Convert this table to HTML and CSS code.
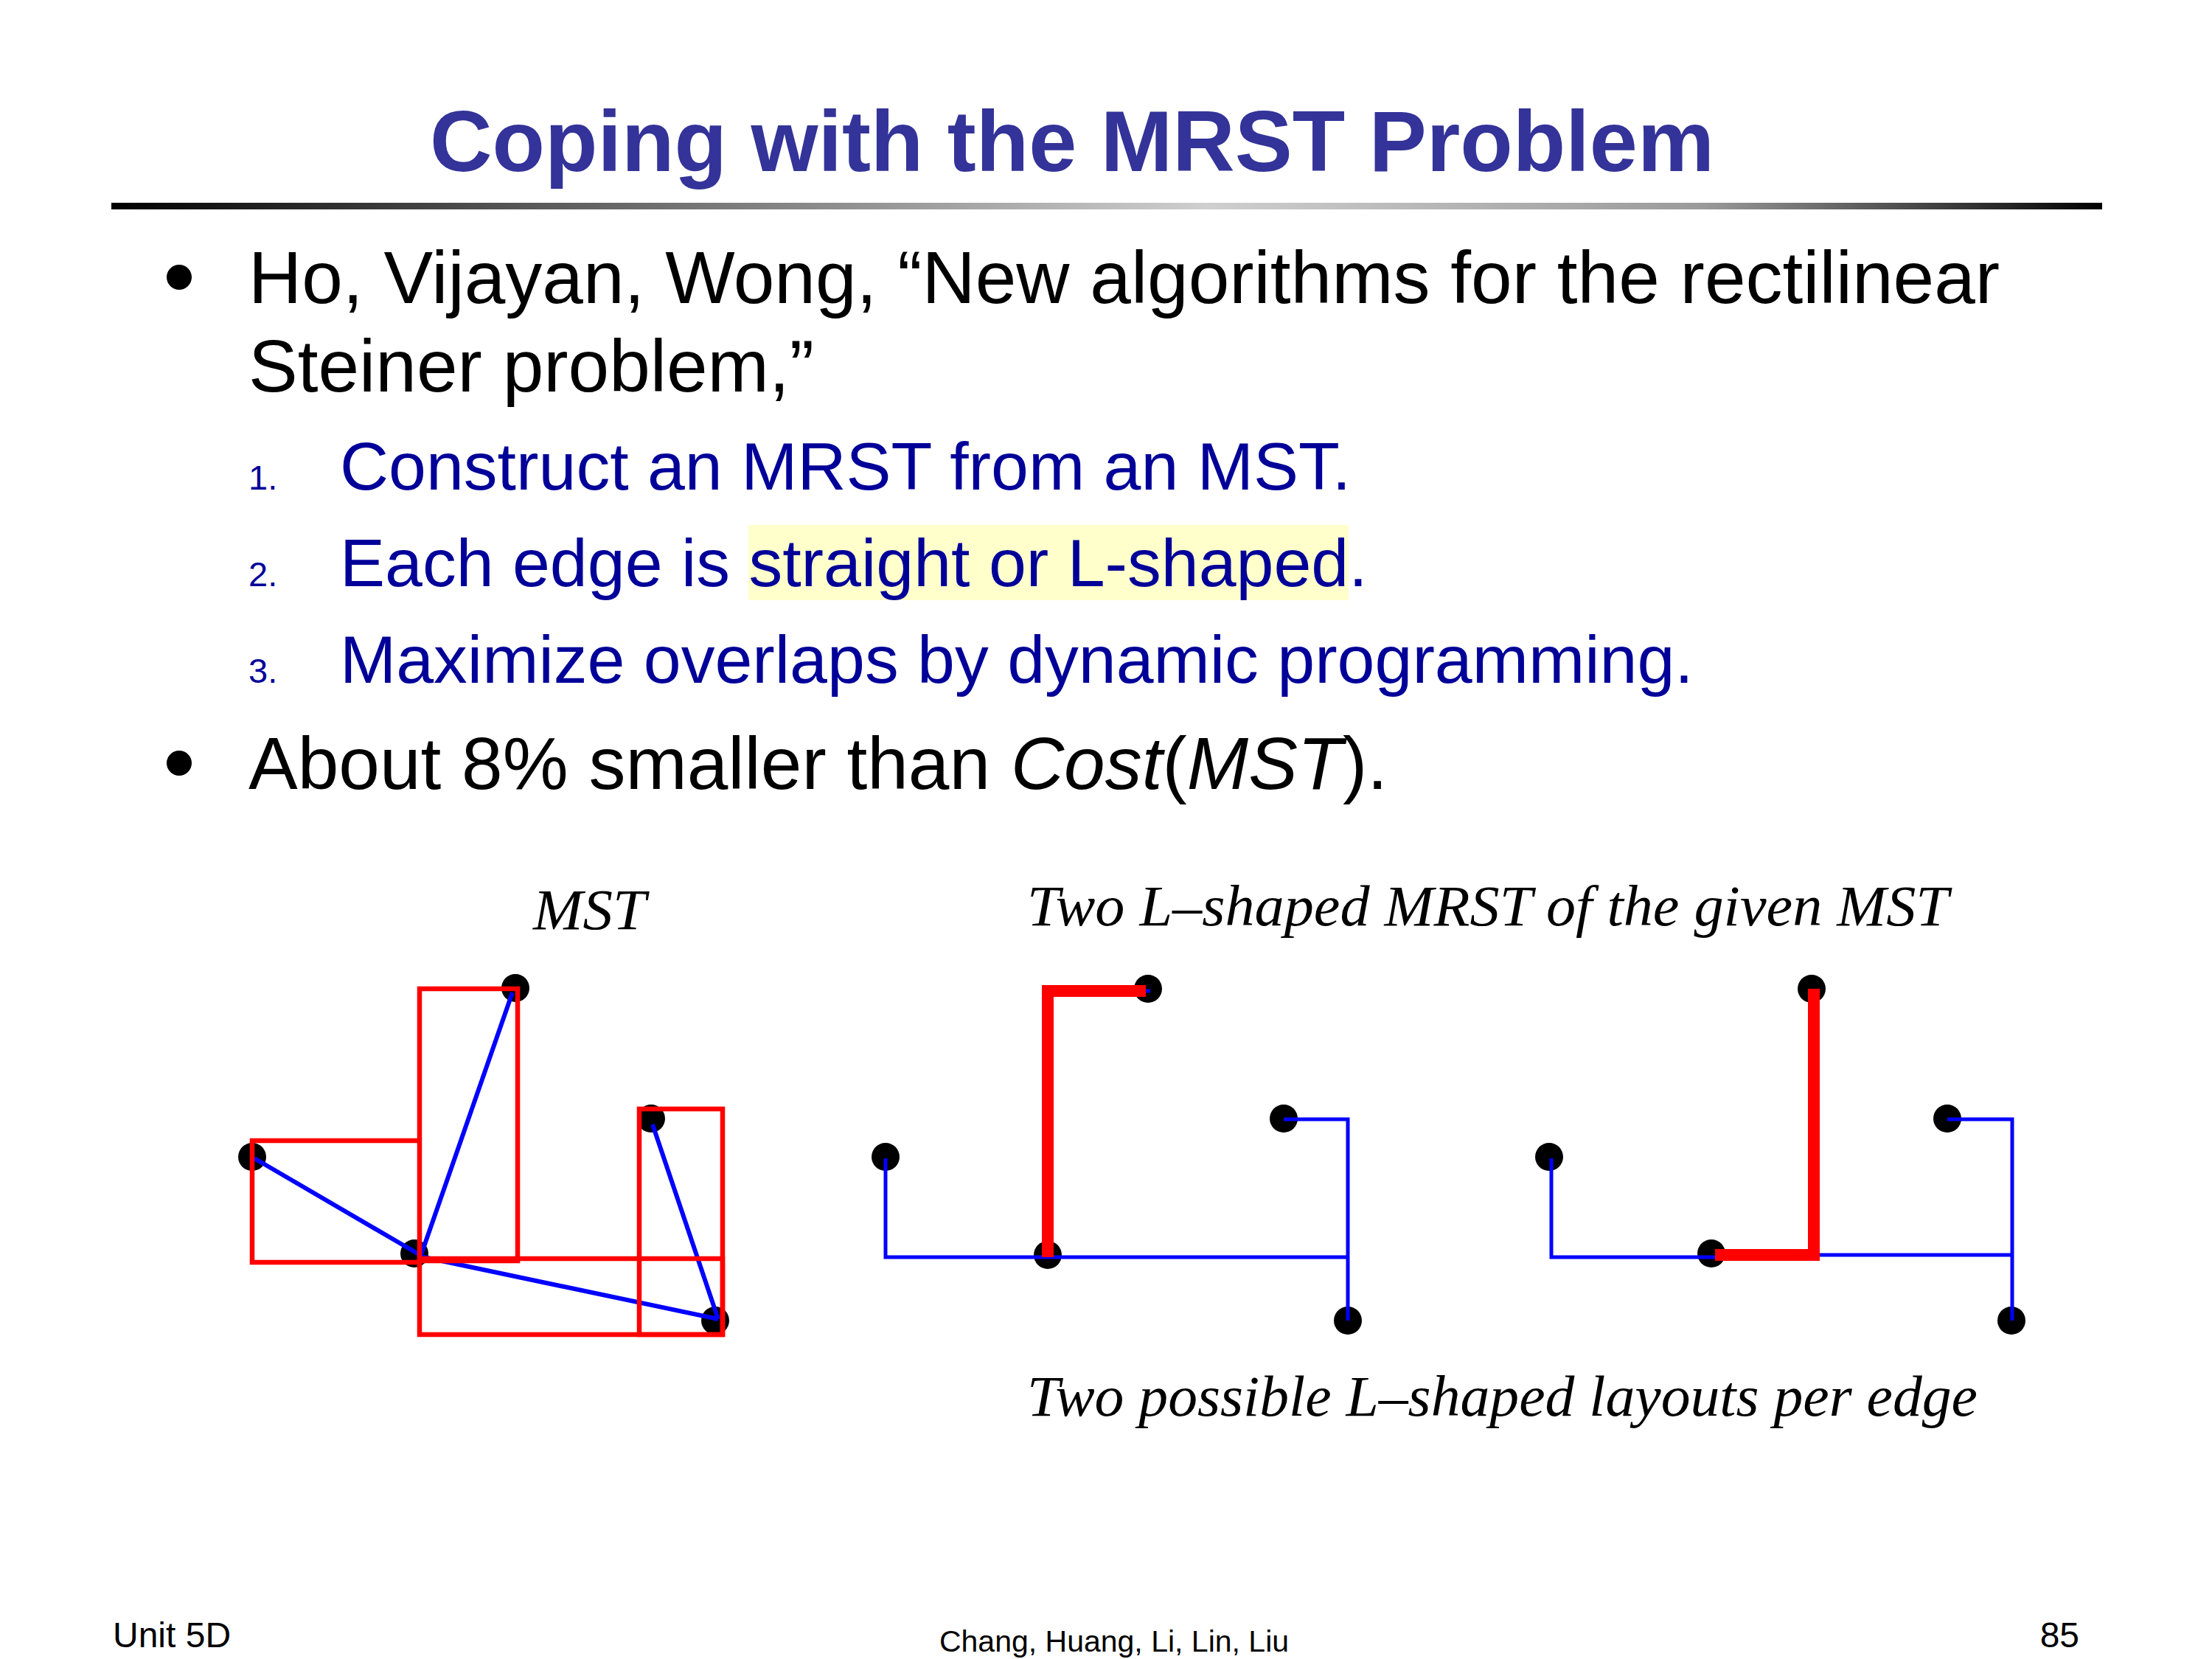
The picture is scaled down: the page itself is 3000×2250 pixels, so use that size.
FILE: index.html
```html
<!DOCTYPE html>
<html lang="en">
<head>
<meta charset="utf-8">
<title>Coping with the MRST Problem</title>
<link rel="stylesheet" href="styles.css">
</head>
<body>
<div class="slide">
  <header class="title-wrap">
    <h1 class="title">Coping with the MRST Problem</h1>
  </header>
  <div class="rule"></div>

  <ul class="bullets">
    <li class="bullet">
      <span class="marker"><span class="dot"></span></span>
      <div class="bullet-body">
        <p class="bullet-text">Ho, Vijayan, Wong, “New algorithms for the rectilinear Steiner problem,”</p>
        <ol class="steps">
          <li class="step"><span class="num">1.</span><span class="step-text">Construct an MRST from an MST.</span></li>
          <li class="step"><span class="num">2.</span><span class="step-text">Each edge is <span class="hl">straight or L-shaped</span>.</span></li>
          <li class="step"><span class="num">3.</span><span class="step-text">Maximize overlaps by dynamic programming.</span></li>
        </ol>
      </div>
    </li>
    <li class="bullet bullet-second">
      <span class="marker"><span class="dot"></span></span>
      <div class="bullet-body">
        <p class="bullet-text">About 8% smaller than <i>Cost</i>(<i>MST</i>).</p>
      </div>
    </li>
  </ul>

  <figure class="diagram">
    <svg class="diagram-svg" width="3000" height="1050" viewBox="0 1100 3000 1050" xmlns="http://www.w3.org/2000/svg">
      <!-- labels -->
      <text class="lbl" x="723" y="1260" textLength="153" lengthAdjust="spacingAndGlyphs">MST</text>
      <text class="lbl" x="1393" y="1255" textLength="1250" lengthAdjust="spacingAndGlyphs">Two L–shaped MRST of the given MST</text>
      <text class="lbl" x="1393" y="1920" textLength="1289" lengthAdjust="spacingAndGlyphs">Two possible L–shaped layouts per edge</text>

      <!-- left: MST with bounding boxes -->
      <g>
        <circle class="pin" cx="699" cy="1340" r="19"/>
        <circle class="pin" cx="342" cy="1569" r="19"/>
        <circle class="pin" cx="562" cy="1700" r="19"/>
        <circle class="pin" cx="883" cy="1517" r="19"/>
        <circle class="pin" cx="970" cy="1791" r="19"/>
        <line class="edge" x1="345" y1="1571" x2="568" y2="1701"/>
        <line class="edge" x1="570" y1="1705" x2="695" y2="1346"/>
        <line class="edge" x1="570" y1="1704" x2="974" y2="1789"/>
        <line class="edge" x1="885" y1="1525" x2="974" y2="1789"/>
        <polyline class="box" points="569,1547 342,1547 342,1712 569,1712"/>
        <rect class="box" x="569" y="1341" width="133" height="369"/>
        <rect class="box" x="569" y="1707" width="411" height="103"/>
        <rect class="box" x="867" y="1504" width="113" height="306"/>
      </g>

      <!-- middle: first L-shaped MRST -->
      <g>
        <circle class="pin" cx="1557" cy="1341" r="19"/>
        <circle class="pin" cx="1201" cy="1569" r="19"/>
        <circle class="pin" cx="1421" cy="1702" r="19"/>
        <circle class="pin" cx="1741" cy="1517" r="19"/>
        <circle class="pin" cx="1828" cy="1791" r="19"/>
        <polyline class="route" points="1201,1571 1201,1705 1828,1705"/>
        <polyline class="route" points="1741,1518 1828,1518 1828,1791"/>
        <line class="route" x1="1554" y1="1344" x2="1560" y2="1344"/>
        <polyline class="route-red" points="1421,1705 1421,1344 1554,1344"/>
      </g>

      <!-- right: second L-shaped MRST -->
      <g>
        <circle class="pin" cx="2457" cy="1341" r="19"/>
        <circle class="pin" cx="2101" cy="1569" r="19"/>
        <circle class="pin" cx="2321" cy="1700" r="19"/>
        <circle class="pin" cx="2641" cy="1517" r="19"/>
        <circle class="pin" cx="2728" cy="1791" r="19"/>
        <polyline class="route" points="2104,1571 2104,1705 2326,1705"/>
        <line class="route" x1="2468" y1="1702" x2="2729" y2="1702"/>
        <polyline class="route" points="2641,1518 2729,1518 2729,1791"/>
        <polyline class="route-red" points="2326,1702 2460,1702 2460,1341"/>
      </g>
    </svg>
  </figure>

  <footer class="footer">
    <span class="foot-side foot-left">Unit 5D</span>
    <span class="foot-mid">Chang, Huang, Li, Lin, Liu</span>
    <span class="foot-side foot-right">85</span>
  </footer>
</div>
</body>
</html>
```

FILE: styles.css
```css
html, body {
  margin: 0;
  padding: 0;
  background: #ffffff;
}

.slide {
  width: 3000px;
  height: 2250px;
  display: flex;
  flex-direction: column;
  overflow: hidden;
  background: #ffffff;
  font-family: "Liberation Sans", Arial, sans-serif;
  color: #000000;
}

/* ---------- title ---------- */
.title-wrap {
  margin: 122px 0 0 583px;
  flex: none;
}

.title {
  margin: 0;
  font-size: 117px;
  line-height: 140px;
  font-weight: bold;
  color: #333399;
  white-space: nowrap;
}

.rule {
  flex: none;
  margin: 13px 0 0 151px;
  width: 2700px;
  height: 9px;
  background: linear-gradient(to right, #000000 0%, #555555 20%, #cfcfcf 55%, #9a9a9a 80%, #000000 100%);
}

/* ---------- bullets ---------- */
.bullets {
  list-style: none;
  margin: 32px 0 0 0;
  padding: 0;
  flex: none;
}

.bullet {
  display: flex;
  padding-left: 226px;
}

.bullet-second {
  margin-top: 15px;
}

.marker {
  flex: none;
  width: 111px;
  height: 120px;
  display: flex;
  align-items: center;
}

.dot {
  width: 34px;
  height: 34px;
  border-radius: 50%;
  background: #000000;
}

.bullet-body {
  width: 2514px;
}

.bullet-text {
  margin: 0;
  font-size: 100px;
  line-height: 120px;
}

.steps {
  list-style: none;
  margin: 11px 0 0 0;
  padding: 0;
  color: #000099;
}

.step {
  height: 131px;
  font-size: 91.5px;
  line-height: 131px;
  white-space: nowrap;
}

.num {
  display: inline-block;
  width: 124px;
  font-size: 47px;
  line-height: 47px;
  vertical-align: baseline;
}

.hl {
  background: #ffffcc;
}

/* ---------- diagram ---------- */
.diagram {
  margin: 5px 0 0 0;
  flex: none;
}

.diagram-svg {
  display: block;
}

.lbl {
  font-family: "Liberation Serif", "Times New Roman", serif;
  font-style: italic;
  font-size: 79px;
  fill: #000000;
}

.pin {
  fill: #000000;
}

.edge {
  stroke: #0000ff;
  stroke-width: 6;
  fill: none;
}

.box {
  stroke: #ff0000;
  stroke-width: 6.5;
  fill: none;
}

.route {
  stroke: #0000ff;
  stroke-width: 5;
  fill: none;
}

.route-red {
  stroke: #ff0000;
  stroke-width: 16;
  fill: none;
  stroke-linejoin: miter;
}

/* ---------- footer ---------- */
.footer {
  flex: none;
  margin-top: auto;
  height: 100px;
  display: flex;
  align-items: flex-start;
  padding: 0 180px 0 153px;
  overflow: hidden;
}

.foot-side {
  flex: 1;
  font-size: 48px;
  line-height: 60px;
  padding-top: 38px;
  white-space: nowrap;
}

.foot-right {
  text-align: right;
}

.foot-mid {
  margin-left: 49px;
  font-size: 41px;
  line-height: 50px;
  padding-top: 51px;
  white-space: nowrap;
}
```
